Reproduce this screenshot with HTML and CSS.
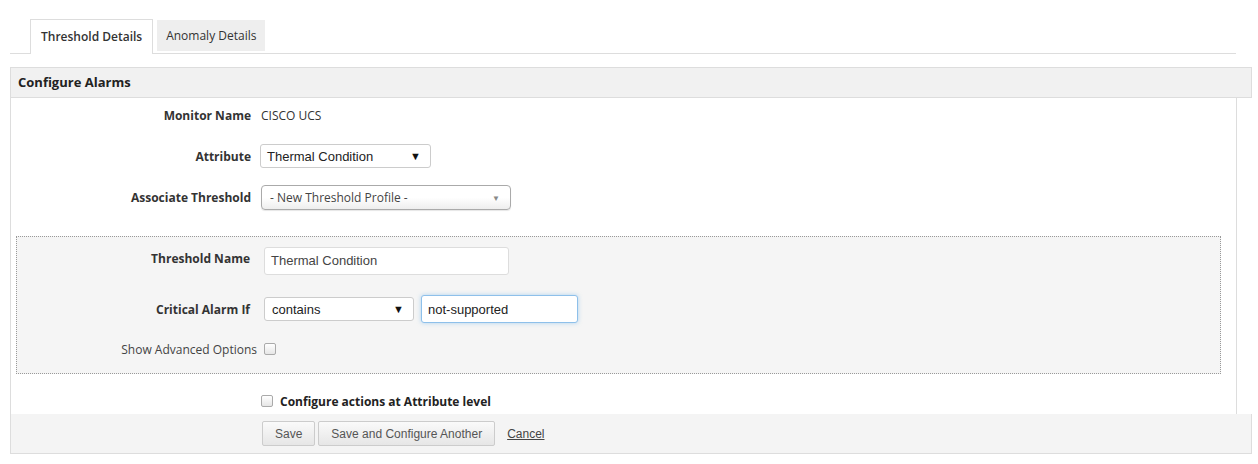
FILE: index.html
```html
<!DOCTYPE html>
<html>
<head>
  <title>Configure Alarms</title>
  <link rel="stylesheet" href="styles.css">
</head>
<body>
  <div class="page">
    <div class="tabs">
      <div class="tab active">Threshold Details</div>
      <div class="tab">Anomaly Details</div>
    </div>

    <div class="panel-head">Configure Alarms</div>

    <div class="panel-body">
      <div class="row row-monitor">
        <div class="label">Monitor Name</div>
        <div class="value">CISCO UCS</div>
      </div>

      <div class="row row-attr">
        <div class="label">Attribute</div>
        <div class="select attr-select">
          <span>Thermal Condition</span>
          <span class="arrow">&#9660;</span>
        </div>
      </div>

      <div class="row row-assoc">
        <div class="label">Associate Threshold</div>
        <div class="select profile-select">
          <span>- New Threshold Profile -</span>
          <span class="arrow small">&#9660;</span>
        </div>
      </div>

      <div class="threshold-box">
        <div class="row row-name">
          <div class="label">Threshold Name</div>
          <div class="input name-input">Thermal Condition</div>
        </div>

        <div class="row row-critical">
          <div class="label">Critical Alarm If</div>
          <div class="select cond-select">
            <span>contains</span>
            <span class="arrow">&#9660;</span>
          </div>
          <div class="input value-input focused">not-supported</div>
        </div>

        <div class="row row-adv">
          <div class="label plain">Show Advanced Options</div>
          <input type="checkbox" class="check">
        </div>
      </div>

      <div class="row row-actions">
        <div class="label"></div>
        <input type="checkbox" class="check">
        <span class="actions-text">Configure actions at Attribute level</span>
      </div>
    </div>

    <div class="panel-foot">
      <button class="btn">Save</button>
      <button class="btn">Save and Configure Another</button>
      <a href="#" class="cancel">Cancel</a>
    </div>
  </div>
</body>
</html>
```

FILE: styles.css
```css
body {
  margin: 0;
  font-family: "Open Sans", sans-serif;
  font-size: 12px;
  color: #333;
  background: #fff;
}

.page {
  padding: 19px 6px 0 10px;
}

/* tabs */
.tabs {
  display: flex;
  align-items: flex-end;
  gap: 4px;
  height: 34px;
  padding-left: 20px;
  margin-right: 16px;
  border-bottom: 1px solid #ddd;
}

.tab {
  height: 31px;
  line-height: 31px;
  padding: 0 9px;
  background: #eee;
  margin-bottom: 2px;
}

.tab.active {
  height: 34px;
  line-height: 34px;
  background: #fff;
  border: 1px solid #ddd;
  border-bottom: none;
  margin-bottom: -1px;
  font-weight: 600;
  padding: 0 10px;
}

/* panel */
.panel-head {
  margin-top: 13px;
  height: 29px;
  line-height: 29px;
  padding-left: 7px;
  background: #f1f1f1;
  border: 1px solid #ddd;
  font-size: 13px;
  font-weight: bold;
  color: #222;
}

.panel-body {
  margin-right: 15px;
  border-left: 1px solid #ddd;
  border-right: 1px solid #ddd;
  padding-top: 5px;
  padding-bottom: 1px;
}

.row {
  display: flex;
  align-items: center;
}

.label {
  width: 240px;
  text-align: right;
  font-weight: bold;
  margin-right: 10px;
  flex-shrink: 0;
}

.label.plain {
  font-weight: normal;
}

.value {
  font-size: 12px;
}

.row-monitor { height: 24px; }
.row-attr { margin-top: 17px; }
.row-assoc { margin-top: 17px; }

.row-attr .label,
.row-assoc .label {
  margin-right: 9px;
}

.select {
  display: flex;
  align-items: center;
  justify-content: space-between;
  box-sizing: border-box;
  border: 1px solid #ccc;
  border-radius: 3px;
  background: #fff;
  font-family: "Liberation Sans", Arial, sans-serif;
  font-size: 13px;
  color: #222;
}

.arrow {
  font-size: 11px;
  color: #111;
}

.arrow.small {
  font-size: 8px;
  color: #888;
}

.attr-select {
  width: 171px;
  height: 24px;
  padding: 0 9px 0 6px;
}

.profile-select {
  width: 250px;
  height: 25px;
  padding: 0 10px 0 8px;
  border-color: #aaa;
  border-radius: 4px;
  background: linear-gradient(#fff 50%, #eee);
  box-shadow: 0 1px 1px rgba(0, 0, 0, 0.1);
  font-family: "Open Sans", sans-serif;
  font-size: 12px;
  color: #444;
  margin-left: 1px;
}

/* threshold box */
.threshold-box {
  margin: 26px 15px 0 5px;
  border: 1px dotted #999;
  background: #f5f5f5;
  padding: 10px 0 12px;
}

.threshold-box .label {
  width: 233px;
  margin-right: 14px;
}

.row-name {
  align-items: flex-start;
}

.row-name .label {
  padding-top: 3px;
}

.input {
  box-sizing: border-box;
  height: 28px;
  line-height: 26px;
  border: 1px solid #ddd;
  border-radius: 3px;
  background: #fff;
  font-family: "Liberation Sans", Arial, sans-serif;
  font-size: 13px;
  color: #444;
  padding: 0 6px;
}

.name-input {
  width: 245px;
}

.row-critical {
  margin-top: 20px;
}

.row-critical .label {
  padding-top: 1px;
}

.cond-select {
  width: 150px;
  height: 24px;
  padding: 0 9px 0 7px;
}

.value-input {
  width: 157px;
  margin-left: 7px;
  color: #222;
  line-height: 27px;
}

.value-input.focused {
  border-color: #8ec0ea;
  box-shadow: 0 0 4px rgba(102, 175, 233, 0.5);
}

.row-adv {
  margin-top: 14px;
  height: 24px;
}

.row-adv .label {
  width: 240px;
  margin-right: 7px;
  color: #444;
}

.check {
  -webkit-appearance: none;
  appearance: none;
  width: 12px;
  height: 12px;
  margin: 0;
  border: 1px solid #aaa;
  border-radius: 2px;
  background: linear-gradient(#fff, #e6e6e6);
  box-sizing: border-box;
}

.row-actions {
  margin-top: 15px;
  height: 24px;
}

.row-actions .label {
  margin-right: 10px;
}

.actions-text {
  margin-left: 7px;
  font-weight: bold;
  color: #222;
}

/* footer */
.panel-foot {
  display: flex;
  align-items: center;
  gap: 3px;
  height: 39px;
  padding-left: 251px;
  background: #f4f4f4;
  border: 1px solid #ddd;
  border-top: none;
}

.btn {
  height: 25px;
  padding: 0 12px;
  border: 1px solid #ccc;
  border-radius: 2px;
  background: linear-gradient(#fafafa, #e6e6e6);
  font-family: "Liberation Sans", Arial, sans-serif;
  font-size: 12px;
  color: #555;
  cursor: pointer;
}

.cancel {
  margin-left: 9px;
  font-family: "Liberation Sans", Arial, sans-serif;
  font-size: 12px;
  color: #444;
}
```
